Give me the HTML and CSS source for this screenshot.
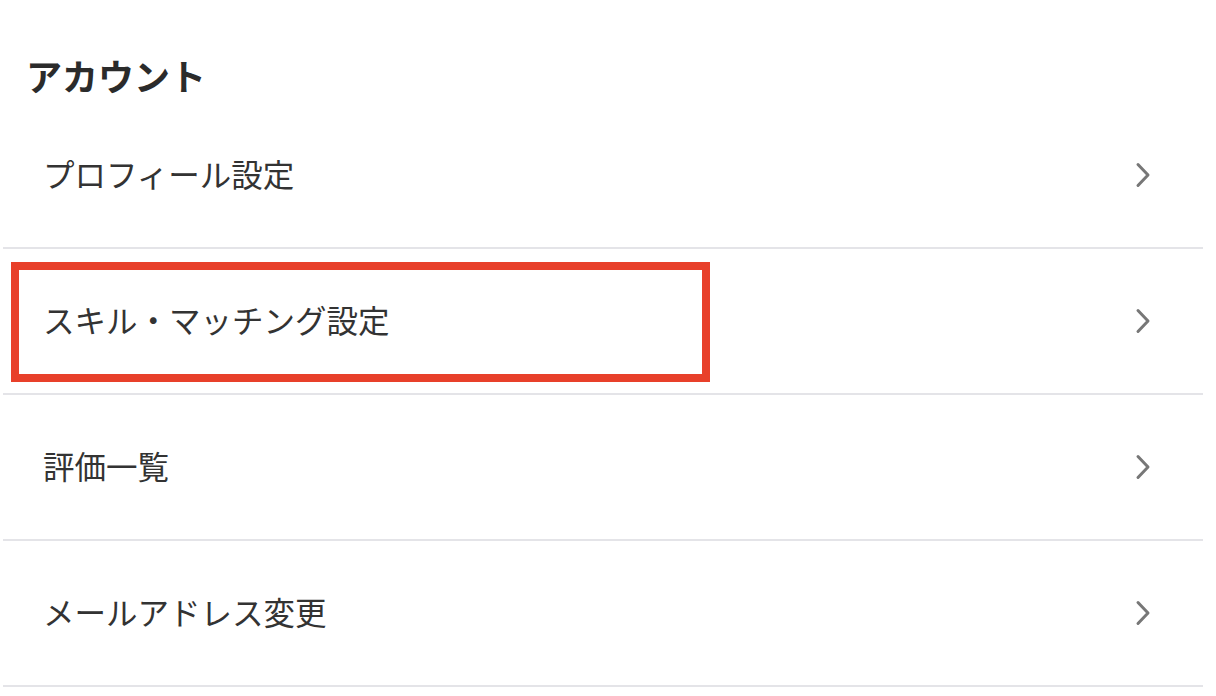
FILE: index.html
```html
<!DOCTYPE html>
<html lang="ja">
<head>
  <meta charset="UTF-8">
  <meta name="viewport" content="width=device-width, initial-scale=1.0">
  <title>アカウント</title>
  <link rel="stylesheet" href="styles.css">
</head>
<body>
<div class="page">
  <h2 class="section-title">アカウント</h2>

  <ul class="menu">
    <li class="menu-item">
      <span class="menu-label">プロフィール設定</span>
      <svg class="chevron" width="16" height="26" viewBox="0 0 16 26">
        <polyline points="3,2.5 13,13 3,23.5" />
      </svg>
    </li>
    <li class="menu-item">
      <span class="menu-label">スキル・マッチング設定</span>
      <svg class="chevron" width="16" height="26" viewBox="0 0 16 26">
        <polyline points="3,2.5 13,13 3,23.5" />
      </svg>
      <div class="highlight"></div>
    </li>
    <li class="menu-item">
      <span class="menu-label">評価一覧</span>
      <svg class="chevron" width="16" height="26" viewBox="0 0 16 26">
        <polyline points="3,2.5 13,13 3,23.5" />
      </svg>
    </li>
    <li class="menu-item">
      <span class="menu-label">メールアドレス変更</span>
      <svg class="chevron" width="16" height="26" viewBox="0 0 16 26">
        <polyline points="3,2.5 13,13 3,23.5" />
      </svg>
    </li>
  </ul>
</div>
</body>
</html>
```

FILE: styles.css
```css
:root {
  --text: #333333;
  --border: #e4e4e8;
  --chevron: #777777;
  --mark: #e8402a;
}

* {
  box-sizing: border-box;
  margin: 0;
  padding: 0;
}

body {
  background: #ffffff;
  color: var(--text);
  font-family: "Noto Sans CJK JP", "Noto Sans", sans-serif;
}

.page {
  width: 1216px;
  padding-left: 3px;
}

.section-title {
  padding: 51px 0 4px 23px;
  font-size: 36px;
  line-height: 48px;
  font-weight: 700;
  color: #2b2b2b;
}

.menu {
  list-style: none;
  width: 1200px;
}

.menu-item {
  position: relative;
  height: 146px;
  display: flex;
  align-items: center;
  justify-content: space-between;
  padding: 0 52px 0 40px;
  border-bottom: 2px solid var(--border);
}

.menu-label {
  font-size: 31.5px;
  line-height: 44px;
  font-weight: 400;
  margin-bottom: 4px;
}

.chevron polyline {
  fill: none;
  stroke: var(--chevron);
  stroke-width: 3;
  stroke-linecap: round;
  stroke-linejoin: round;
}

/* annotation box drawn over the row */
.highlight {
  position: absolute;
  left: 8px;
  top: 13px;
  width: 699px;
  height: 120px;
  border: 8px solid var(--mark);
  pointer-events: none;
}
```
